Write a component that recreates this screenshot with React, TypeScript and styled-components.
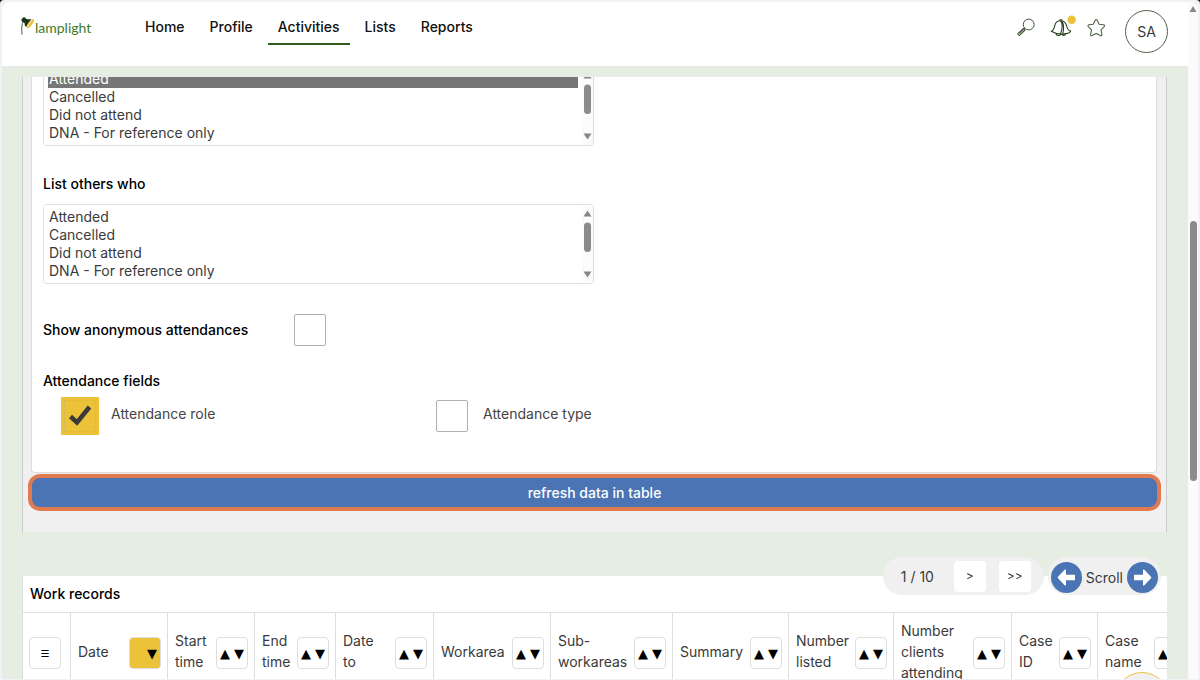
import React from "react";
import styled, { createGlobalStyle, css } from "styled-components";

const color = {
  green: "#2f5d1e",
  pale: "#e6eee3",
  blue: "#4a74b4",
  orange: "#e17b4f",
  yellow: "#ecc239",
  line: "#dedede",
  grey: "#f0f0f1",
  text: "#3a3a3a",
};

const GlobalStyle = createGlobalStyle`
  * { box-sizing: border-box; }
  body { margin: 0; background: #000; }
  body, button, select, input {
    font-family: Inter, "Liberation Sans", sans-serif;
    font-size: 14px;
  }
`;

const Frame = styled.div`
  display: flex;
  height: 100vh;
  padding: 2px 2px 1px;
  overflow: hidden;
  position: relative;
  background: #f2f1f6;
  border-radius: 4px 4px 0 0;
`;

const Page = styled.div`
  display: flex;
  flex: 1;
  flex-direction: column;
  min-width: 0;
  position: relative;
  overflow: hidden;
  background: ${color.pale};
  border-radius: 8px 0 0 0;
`;

const Header = styled.header`
  display: flex;
  flex: none;
  align-items: flex-start;
  height: 64px;
  padding: 8px 20px 0 18px;
  background: #fff;
`;

const Logo = styled.a`
  display: flex;
  width: 115px;
  padding-top: 5px;
  color: #3f7a1f;
  font-family: Lato, sans-serif;
  font-size: 14px;
  line-height: 26px;
  text-decoration: none;
  svg { flex: none; }
`;

const Nav = styled.nav`
  display: flex;
  gap: 5px;
`;

const NavLink = styled.a<{ $active?: boolean }>`
  padding: 7px 10px 14px;
  color: #111;
  font-weight: 500;
  line-height: 20px;
  text-decoration: none;
  ${(p) => p.$active && css`
    padding-bottom: 12px;
    height: 35px;
    border-bottom: 2px solid ${color.green};
  `}
`;

const Tools = styled.div`
  display: flex;
  gap: 12px;
  margin-left: auto;
`;

const ToolButton = styled.button`
  width: 24px;
  height: 24px;
  margin-top: 6px;
  padding: 0;
  border: 0;
  background: none;
  svg { display: block; overflow: visible; }
`;

const Avatar = styled.button`
  width: 43px;
  height: 43px;
  margin-left: 4px;
  padding: 0;
  border: 1px solid #4f6149;
  border-radius: 50%;
  background: #fff;
  color: ${color.text};
`;

const Main = styled.main`
  flex: 1;
  min-height: 0;
  padding: 11px 21px 0 20px;
`;

const Viewport = styled.div`
  height: 100%;
  overflow: hidden;
`;

const Scrolled = styled.div`
  margin-top: -11px;
`;

const Panel = styled.section`
  padding: 0 9px 21px 8px;
  border: solid #ccc;
  border-width: 0 1px;
  background: ${color.grey};
`;

const Card = styled.div`
  padding: 0 11px 37px;
  border: 1px solid #dcdcdc;
  border-top: 0;
  border-radius: 0 0 4px 4px;
  background: #fff;
`;

const ListFrame = styled.div`
  display: flex;
  max-width: 551px;
  height: 80px;
  border: 1px solid ${color.line};
  border-radius: 4px;
  overflow: hidden;
  background: #fff;
`;

const ListBox = styled.select`
  flex: 1;
  height: 78px;
  padding: 3px 4px;
  border: 0;
  outline: 0;
  background: #fff;
  color: ${color.text};
  overflow: hidden;
  scrollbar-width: none;
  option {
    min-height: 18px;
    height: 18px;
    padding: 0 1px;
    line-height: 18px;
  }
  option:checked {
    background: #767676 linear-gradient(#767676, #767676);
    color: #fff;
    -webkit-text-fill-color: #fff;
  }
`;

const ListScroll = styled.svg`
  flex: none;
  width: 11px;
  height: 78px;
  background: #fbfbfb;
`;

const Title = styled.label<{ $above?: number; $below?: number }>`
  display: block;
  margin-top: ${(p) => p.$above ?? 0}px;
  margin-bottom: ${(p) => p.$below ?? 0}px;
  color: #000;
  font-weight: 500;
  line-height: 20px;
`;

const Row = styled.div`
  display: grid;
  grid-template-columns: 248px auto;
  align-items: center;
  margin-top: 27px;
`;

const Fieldset = styled.fieldset`
  min-width: 0;
  margin: 22px 0 0;
  padding: 0;
  border: 0;
`;

const Legend = styled.legend`
  padding: 0;
  color: #000;
  font-weight: 500;
  line-height: 20px;
`;

const Options = styled.div`
  display: grid;
  grid-template-columns: 372px auto;
  padding: 6px 0 0 18px;
`;

const Option = styled.label`
  display: flex;
  gap: 12px;
  color: #444;
  line-height: 34px;
`;

const Tick = styled.span`
  display: grid;
  width: 38px;
  height: 38px;
  > * { grid-area: 1 / 1; }
  svg { pointer-events: none; z-index: 1; }
`;

const Check = styled.input`
  appearance: none;
  width: 32px;
  height: 32px;
  margin: 3px;
  border: 1px solid #b0b0b0;
  border-radius: 2px;
  background: #fff;
  &:checked {
    width: 38px;
    height: 38px;
    margin: 0;
    border: 4px solid ${color.yellow};
    border-radius: 0;
    background: ${color.yellow};
    outline: 1px dotted #cdb56a;
    outline-offset: -4px;
  }
`;

const Refresh = styled.button`
  display: block;
  width: calc(100% + 7px);
  height: 37px;
  margin: 1px -4px 0 -3px;
  padding: 0;
  border: 4px solid ${color.orange};
  border-radius: 12px;
  background: ${color.blue};
  color: #fff;
  font-weight: 500;
`;

const Toolbar = styled.div`
  display: flex;
  justify-content: flex-end;
  gap: 4px;
  position: relative;
  height: 38px;
  margin: 25px 6px -19px 0;
`;

const Pill = styled.div<{ $snug?: boolean }>`
  display: flex;
  align-items: center;
  gap: ${(p) => (p.$snug ? 4 : 13)}px;
  height: 38px;
  padding: ${(p) => (p.$snug ? "2px 3px 0" : "0 13px 0 18px")};
  border-radius: 19px;
  background: ${color.grey};
  color: ${color.text};
`;

const PageCount = styled.span`
  width: 40px;
  white-space: nowrap;
`;

const PageButton = styled.button`
  width: 32px;
  height: 31px;
  padding: 0 0 2px;
  border: 0;
  border-radius: 4px;
  background: #fff;
  color: ${color.text};
  font-size: 12px;
`;

const RoundButton = styled.button`
  width: 31px;
  height: 31px;
  padding: 0;
  border: 0;
  border-radius: 50%;
  background: ${color.blue};
  svg { display: block; }
`;

const Records = styled.section`
  overflow: hidden;
  background: #fff;
`;

const Heading = styled.h2`
  margin: 0;
  padding: 8px 7px;
  border-left: 1px solid ${color.line};
  color: #000;
  font-size: 14px;
  font-weight: 500;
  line-height: 20px;
`;

const Table = styled.table`
  width: 1198px;
  table-layout: fixed;
  border-collapse: separate;
  border-spacing: 0;
`;

const Th = styled.th`
  height: 77px;
  padding: 0 6px 0 7px;
  border: solid ${color.line};
  border-width: 1px 1px 0 0;
  color: ${color.text};
  font-weight: 400;
  line-height: 21px;
  text-align: left;
  &:first-child {
    padding-left: 6px;
    border-left-width: 1px;
  }
`;

const HeadCell = styled.div`
  display: flex;
  align-items: center;
  justify-content: space-between;
`;

const SortButton = styled.button<{ $active?: boolean }>`
  display: flex;
  flex: none;
  align-items: center;
  justify-content: center;
  gap: 4px;
  width: 32px;
  height: 32px;
  margin-top: 4px;
  padding: 0;
  border: 1px solid ${color.line};
  border-radius: 4px;
  background: ${(p) => (p.$active ? color.yellow : "#fff")};
  color: #000;
  font-family: "DejaVu Sans", sans-serif;
  font-size: 13px;
  span:first-child { color: ${(p) => (p.$active ? color.yellow : "#000")}; }
`;

const MenuButton = styled(SortButton)`
  font-size: 10px;
`;

const Help = styled.button`
  position: absolute;
  right: 19px;
  bottom: -53px;
  width: 54px;
  height: 60px;
  border: 1px solid ${color.yellow};
  border-radius: 27px;
  background: ${color.grey};
`;

const Track = styled.div`
  display: flex;
  flex: none;
  flex-direction: column;
  align-items: center;
  width: 10px;
  background: #fbfbfc;
  border-radius: 0 8px 0 0;
  svg { flex: none; margin-top: 4px; }
`;

const TrackGap = styled.div`
  flex: 208;
`;

const Thumb = styled.div`
  flex: 260;
  width: 7px;
  border-radius: 4px;
  background: #8b8b8b;
`;

const TrackRest = styled.div`
  flex: 198;
`;

const statuses = ["Attended", "Cancelled", "Did not attend", "DNA - For reference only"];

function StatusList({ id, label, selected }: { id: string; label?: string; selected?: string[] }) {
  return (
    <ListFrame>
      <ListBox id={id} multiple size={4} defaultValue={selected ?? []} aria-label={label}>
        {statuses.map((s) => <option key={s}>{s}</option>)}
      </ListBox>
      <ListScroll viewBox="0 0 11 78" aria-hidden="true">
        <path d="M5.500 5.500 9.500 11.500H1.500Z" fill="#868686" />
        <rect x="2" y="17.500" width="7" height="29.500" rx="3.500" fill="#8b8b8b" />
        <path d="M1.500 66.500H9.500L5.500 72.500Z" fill="#868686" />
      </ListScroll>
    </ListFrame>
  );
}

function LampIcon() {
  return (
    <svg width="15" height="22" viewBox="0 0 15 22" aria-hidden="true">
      <path d="M2 19.500C1.500 14 1.500 9 3.500 6" fill="none" stroke="#4a5a45" strokeWidth="1" />
      <path d="M1.500 4 4 2 7 4.200 11 4.200 11.500 6 8.500 11 6.500 12 5 11 4.500 8 1.600 6.300Z" fill="#1d3516" />
      <ellipse cx="10.300" cy="8.600" rx="2" ry="5.400" transform="rotate(36 10.300 8.600)" fill={color.yellow} />
      <path d="M6.300 12.200 12 4.300" stroke="#fff" strokeWidth=".7" />
    </svg>
  );
}

function SearchIcon() {
  return (
    <svg width="24" height="24" viewBox="0 0 24 24" fill="none" stroke="#3d5237" aria-hidden="true">
      <circle cx="15.700" cy="8.500" r="5.400" strokeWidth="1" />
      <path d="M11.800 12.300 10.700 13.400M10.300 12.500 11.900 14.200 6.500 19.300 5.300 18.900 4.900 17.700Z" strokeWidth="1.100" />
      <path d="m6.400 17.700 4-3.700" strokeWidth="1" />
    </svg>
  );
}

function BellIcon() {
  return (
    <svg width="24" height="24" viewBox="0 0 24 24" fill="none" stroke="#25401c" strokeWidth="1.100" strokeLinejoin="round" aria-hidden="true">
      <path d="M2.200 15.200C5 14.500 5.300 11.500 5.900 9.200 6.700 6 9 4.800 11.500 4.800 14.500 4.800 16.800 6.600 17.700 10c.6 2.700 1.400 4.600 4 5.100-.5 1.600-2.400 2.300-4.600 2.500C13 18.500 7 18 2.200 15.200Z" />
      <path d="M11.500 4.800C14 7 13.500 13 11.500 17.800M13 5.300c2.300 4 1.800 8.300.8 12.300M7 17.600c0 2.400 4.500 2.600 4.800.3M13 18c.5 2.200 3.400 1.900 3.700-.3M10.500 3.800h2.300v1" />
      <circle cx="22.700" cy="3.800" r="4.200" fill={color.yellow} stroke="none" />
    </svg>
  );
}

function StarIcon() {
  return (
    <svg width="24" height="24" viewBox="0 0 24 24" fill="none" stroke="#50634a" strokeWidth="1.100" strokeLinejoin="round" aria-hidden="true">
      <path d="M10.300 4.100c.5-.8 1.300-.8 1.800 0l2 4.200 4.400.5c1 .2 1.300 1 .7 1.800l-3.200 3.300.9 4.600c.1 1-.7 1.500-1.500 1.100l-4.100-2.200-4.100 2.200c-.9.400-1.700-.1-1.600-1.100l.9-4.600-3.200-3.300c-.6-.8-.3-1.600.7-1.800l4.300-.5Z" />
    </svg>
  );
}

function ArrowIcon({ left }: { left?: boolean }) {
  return (
    <svg width="31" height="31" viewBox="0 0 31 31" aria-hidden="true">
      <path
        d="M7 12.800H16V8.300C16 7.300 16.800 7.200 17.400 7.800L24 14.700C24.500 15.200 24.500 15.800 24 16.300L17.400 23.200C16.800 23.800 16 23.700 16 22.700V18.200H7Z"
        fill="#fff"
        transform={left ? "matrix(-1 0 0 1 31 0)" : undefined}
      />
    </svg>
  );
}

const columns: { lines: string[]; width: number; active?: boolean }[] = [
  { lines: ["Date"], width: 97, active: true },
  { lines: ["Start", "time"], width: 87 },
  { lines: ["End", "time"], width: 81 },
  { lines: ["Date", "to"], width: 98 },
  { lines: ["Workarea"], width: 117 },
  { lines: ["Sub-", "workareas"], width: 122 },
  { lines: ["Summary"], width: 116 },
  { lines: ["Number", "listed"], width: 105 },
  { lines: ["Number", "clients", "attending"], width: 118 },
  { lines: ["Case", "ID"], width: 86 },
  { lines: ["Case", "name"], width: 95 },
];

const navItems = ["Home", "Profile", "Activities", "Lists", "Reports"];

export default function App() {
  return (
    <>
      <GlobalStyle />
      <Frame>
        <Page>
          <Header>
            <Logo href="#"><LampIcon />lamplight</Logo>
            <Nav>
              {navItems.map((n) => (
                <NavLink key={n} href="#" $active={n === "Activities"}>{n}</NavLink>
              ))}
            </Nav>
            <Tools>
              <ToolButton aria-label="Search"><SearchIcon /></ToolButton>
              <ToolButton aria-label="Notifications"><BellIcon /></ToolButton>
              <ToolButton aria-label="Favourites"><StarIcon /></ToolButton>
              <Avatar>SA</Avatar>
            </Tools>
          </Header>
          <Main>
            <Viewport>
              <Scrolled>
                <Panel>
                  <Card>
                    <StatusList id="people" label="List people who" selected={["Attended"]} />
                    <Title htmlFor="others" $above={28} $below={10}>List others who</Title>
                    <StatusList id="others" />
                    <Row>
                      <Title htmlFor="anonymous">Show anonymous attendances</Title>
                      <Tick><Check id="anonymous" type="checkbox" /></Tick>
                    </Row>
                    <Fieldset>
                      <Legend>Attendance fields</Legend>
                      <Options>
                        <Option>
                          <Tick>
                            <Check type="checkbox" defaultChecked />
                            <svg width="38" height="38" viewBox="0 0 38 38" aria-hidden="true">
                              <path d="m9.500 19.500 6.500 6 12.500-15.500" fill="none" stroke="#3a3a3a" strokeWidth="4.500" />
                            </svg>
                          </Tick>
                          Attendance role
                        </Option>
                        <Option>
                          <Tick><Check type="checkbox" /></Tick>
                          Attendance type
                        </Option>
                      </Options>
                    </Fieldset>
                  </Card>
                  <Refresh>refresh data in table</Refresh>
                </Panel>
                <Toolbar>
                  <Pill>
                    <PageCount>1 / 10</PageCount>
                    <PageButton>&gt;</PageButton>
                    <PageButton>&gt;&gt;</PageButton>
                  </Pill>
                  <Pill $snug>
                    <RoundButton aria-label="Scroll left"><ArrowIcon left /></RoundButton>
                    Scroll
                    <RoundButton aria-label="Scroll right"><ArrowIcon /></RoundButton>
                  </Pill>
                </Toolbar>
                <Records>
                  <Heading>Work records</Heading>
                  <Table>
                    <colgroup>
                      <col width={49} />
                      {columns.map((c, i) => <col key={i} width={c.width} />)}
                      <col />
                    </colgroup>
                    <thead>
                      <tr>
                        <Th><MenuButton aria-label="Menu">☰</MenuButton></Th>
                        {columns.map((c, i) => (
                          <Th key={i} scope="col">
                            <HeadCell>
                              <div>{c.lines.map((l) => <div key={l}>{l}</div>)}</div>
                              <SortButton $active={c.active}><span>▲</span><span>▼</span></SortButton>
                            </HeadCell>
                          </Th>
                        ))}
                      </tr>
                    </thead>
                  </Table>
                </Records>
              </Scrolled>
            </Viewport>
          </Main>
          <Help aria-label="Help" />
        </Page>
        <Track aria-hidden="true">
          <svg width="8" height="7" viewBox="0 0 8 7"><path d="M4 0 7.500 6H.5Z" fill="#868686" /></svg>
          <TrackGap />
          <Thumb />
          <TrackRest />
        </Track>
      </Frame>
    </>
  );
}
